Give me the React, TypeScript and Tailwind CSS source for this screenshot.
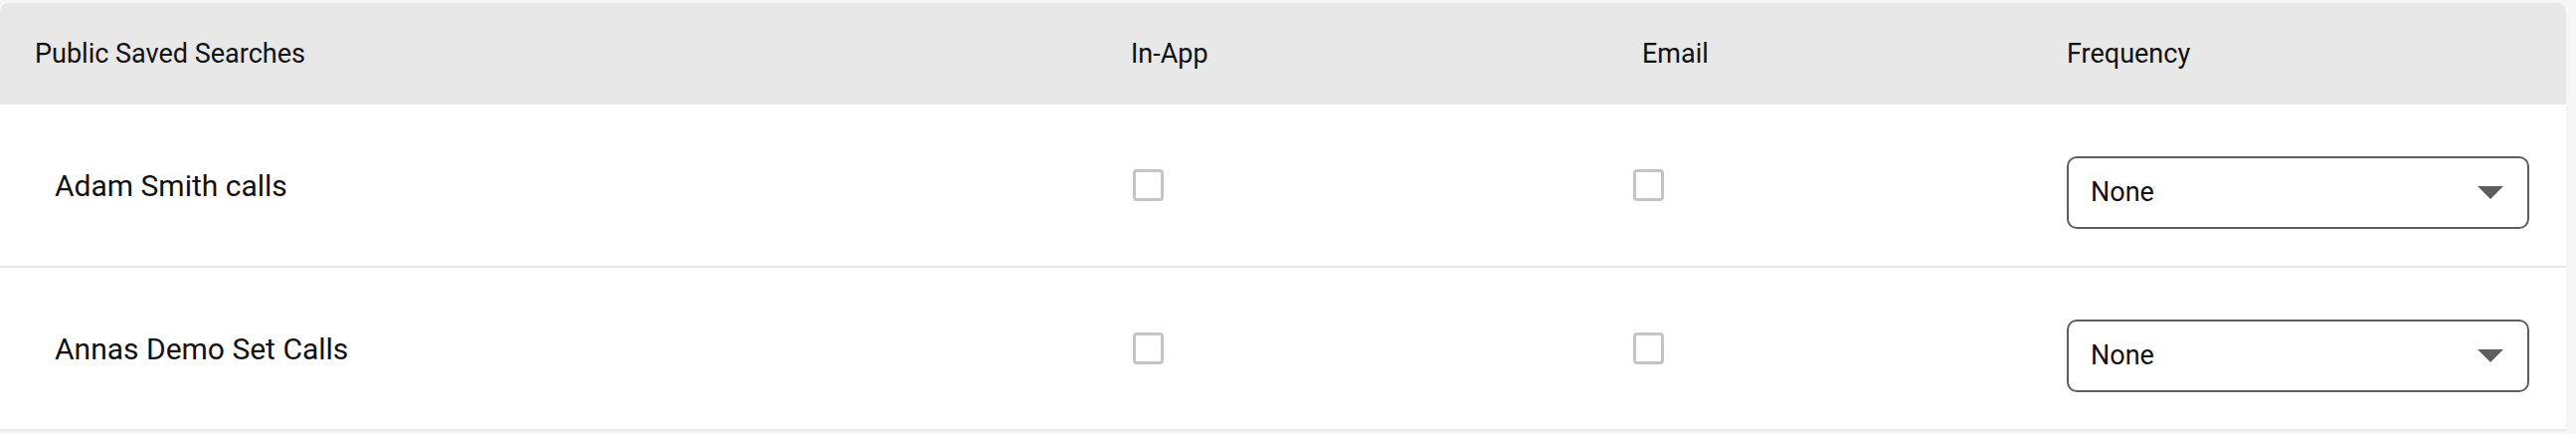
import { useState } from 'react';

type Row = { id: string; name: string };

const rows: Row[] = [
  { id: 'adam', name: 'Adam Smith calls' },
  { id: 'annas', name: 'Annas Demo Set Calls' },
];

function Checkbox({ checked, onChange }: { checked: boolean; onChange: () => void }) {
  return (
    <button
      type="button"
      onClick={onChange}
      className="w-[31px] h-[32px] rounded-[4px] border-[3px] border-[#c4c4c4] bg-white"
      aria-pressed={checked}
    />
  );
}

function FrequencySelect() {
  return (
    <div className="mt-[15px] w-[465px] h-[73px] rounded-[10px] border-2 border-[#5e5e5e] bg-white pl-[22px] pr-[24px] flex items-center justify-between">
      <span className="text-[27px] text-[#111]">None</span>
      <svg width="26" height="13" viewBox="0 0 26 13">
        <path d="M0 0 H26 L13 13 Z" fill="#5e5e5e" />
      </svg>
    </div>
  );
}

export default function App() {
  const [state, setState] = useState<Record<string, { app: boolean; email: boolean }>>({});

  const toggle = (id: string, key: 'app' | 'email') =>
    setState((s) => ({ ...s, [id]: { app: false, email: false, ...s[id], [key]: !s[id]?.[key] } }));

  return (
    <div className="min-h-screen bg-[#f5f5f5] pt-[3px] font-['Roboto',sans-serif] text-[#111]">
      <div className="w-[2580px] rounded-t-[8px] overflow-hidden bg-white">
        {/* Header */}
        <div className="grid grid-cols-[1102px_514px_427px_1fr] h-[102px] bg-[#e8e8e8] text-[27px]">
          <div className="flex items-center pl-[35px]">Public Saved Searches</div>
          <div className="flex items-center pl-[35px]">In-App</div>
          <div className="flex items-center pl-[35px]">Email</div>
          <div className="flex items-center pl-[35px]">Frequency</div>
        </div>

        {rows.map((row) => (
          <div
            key={row.id}
            className="grid grid-cols-[1102px_514px_427px_1fr] h-[164px] border-b-2 border-[#e8e8e8]"
          >
            <div className="flex items-center pl-[55px] text-[30px]">{row.name}</div>
            <div className="flex items-center pl-[37px]">
              <Checkbox checked={!!state[row.id]?.app} onChange={() => toggle(row.id, 'app')} />
            </div>
            <div className="flex items-center pl-[26px]">
              <Checkbox checked={!!state[row.id]?.email} onChange={() => toggle(row.id, 'email')} />
            </div>
            <div className="flex items-center pl-[35px]">
              <FrequencySelect />
            </div>
          </div>
        ))}
      </div>
    </div>
  );
}
